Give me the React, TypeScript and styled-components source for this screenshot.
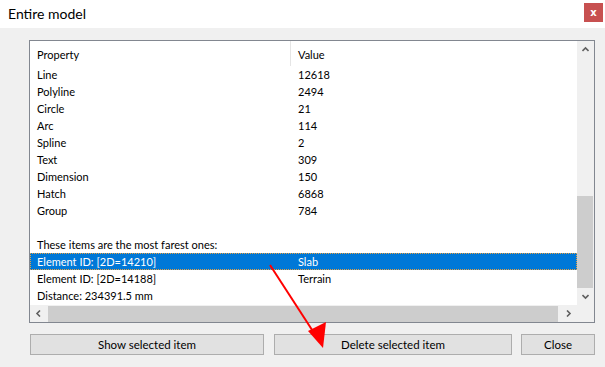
import React from "react";
import styled, { createGlobalStyle } from "styled-components";

const GlobalStyle = createGlobalStyle`
  html, body {
    margin: 0;
    padding: 0;
    background: #f0f0f0;
  }
  * {
    box-sizing: border-box;
  }
`;

const FONT = `"Segoe UI", Lato, "Liberation Sans", sans-serif`;

const Window = styled.div`
  position: relative;
  width: 605px;
  height: 367px;
  display: flex;
  flex-direction: column;
  background: #f0f0f0;
  font-family: ${FONT};
  font-size: 11px;
  color: #000;
  overflow: hidden;
`;

const TitleBar = styled.div`
  height: 28px;
  background: #ffffff;
  display: flex;
  align-items: center;
  justify-content: space-between;
  padding: 0 2px 0 8px;
`;

const Title = styled.span`
  font-size: 14px;
  color: #000;
  margin-top: -2px;
`;

const CloseX = styled.div`
  width: 19px;
  height: 19px;
  margin-top: -4px;
  background: #c75050;
  color: #fff;
  font-family: "DejaVu Sans", sans-serif;
  font-weight: bold;
  font-size: 10px;
  display: flex;
  align-items: center;
  justify-content: center;
`;

const Body = styled.div`
  flex: 1;
  display: flex;
  flex-direction: column;
  padding: 12px 10px 0 29px;
`;

const ListBox = styled.div`
  width: 566px;
  height: 283px;
  border: 1px solid #828790;
  background: #ffffff;
  display: grid;
  grid-template-columns: 1fr 17px;
  grid-template-rows: 1fr 17px;
`;

const Viewport = styled.div`
  display: flex;
  flex-direction: column;
  overflow: hidden;
`;

const HeaderRow = styled.div`
  height: 25px;
  display: grid;
  grid-template-columns: 261px 1fr;
  align-items: center;
`;

const HeaderCell = styled.div<{ $divider?: boolean }>`
  height: 100%;
  display: flex;
  align-items: center;
  padding-left: 7px;
  padding-top: 1px;
  border-right: ${(p) => (p.$divider ? "1px solid #e5e5e5" : "none")};
`;

const Row = styled.div<{ $selected?: boolean }>`
  height: 17px;
  display: grid;
  grid-template-columns: 261px 1fr;
  align-items: center;
  background: ${(p) => (p.$selected ? "#0078d7" : "transparent")};
  color: ${(p) => (p.$selected ? "#ffffff" : "#000000")};
  outline: ${(p) => (p.$selected ? "1px dotted #e8a040" : "none")};
  outline-offset: -1px;
`;

const Cell = styled.div`
  padding-left: 7px;
  white-space: nowrap;
  line-height: 17px;
`;

const VScroll = styled.div`
  background: #f0f0f0;
  display: flex;
  flex-direction: column;
`;

const HScroll = styled.div`
  background: #f0f0f0;
  display: flex;
  align-items: stretch;
`;

const Corner = styled.div`
  background: #f0f0f0;
`;

const ArrowBox = styled.div<{ $size: string }>`
  flex: 0 0 ${(p) => p.$size};
  display: flex;
  align-items: center;
  justify-content: center;
`;

const Track = styled.div<{ $vertical?: boolean }>`
  flex: 1;
  display: flex;
  flex-direction: ${(p) => (p.$vertical ? "column" : "row")};
`;

const Thumb = styled.div<{ $vertical?: boolean }>`
  background: #cdcdcd;
  margin: ${(p) => (p.$vertical ? "0 1px 0 0" : "1px 0 0 1px")};
`;

const ButtonRow = styled.div`
  display: flex;
  margin-top: 11px;
  padding-left: 1px;
`;

const Button = styled.button<{ $w: number; $gap?: number }>`
  width: ${(p) => p.$w}px;
  height: 21px;
  margin-left: ${(p) => p.$gap ?? 0}px;
  background: #e1e1e1;
  border: 1px solid #adadad;
  font-family: ${FONT};
  font-size: 11.5px;
  color: #000;
  padding: 0 0 1px;
`;

const Annotation = styled.svg`
  position: absolute;
  left: 0;
  top: 0;
  pointer-events: none;
`;

const Chevron = ({ dir }: { dir: "up" | "down" | "left" | "right" }) => {
  const paths: Record<string, string> = {
    up: "M0.5 5 L3.5 2 L6.5 5",
    down: "M0.5 2 L3.5 5 L6.5 2",
    left: "M5 0.5 L2 3.5 L5 6.5",
    right: "M2 0.5 L5 3.5 L2 6.5",
  };
  return (
    <svg width="7" height="7" viewBox="0 0 7 7">
      <path d={paths[dir]} fill="none" stroke="#606060" strokeWidth="1.6" />
    </svg>
  );
};

const props: [string, string][] = [
  ["Line", "12618"],
  ["Polyline", "2494"],
  ["Circle", "21"],
  ["Arc", "114"],
  ["Spline", "2"],
  ["Text", "309"],
  ["Dimension", "150"],
  ["Hatch", "6868"],
  ["Group", "784"],
];

export default function App() {
  return (
    <>
      <GlobalStyle />
      <Window>
        <TitleBar>
          <Title>Entire model</Title>
          <CloseX>x</CloseX>
        </TitleBar>
        <Body>
          <ListBox>
            <Viewport>
              <HeaderRow>
                <HeaderCell $divider>Property</HeaderCell>
                <HeaderCell>Value</HeaderCell>
              </HeaderRow>
              {props.map(([k, v]) => (
                <Row key={k}>
                  <Cell>{k}</Cell>
                  <Cell>{v}</Cell>
                </Row>
              ))}
              <Row>
                <Cell />
                <Cell />
              </Row>
              <Row>
                <Cell>These items are the most farest ones:</Cell>
                <Cell />
              </Row>
              <Row $selected>
                <Cell>Element ID: [2D=14210]</Cell>
                <Cell>Slab</Cell>
              </Row>
              <Row>
                <Cell>Element ID: [2D=14188]</Cell>
                <Cell>Terrain</Cell>
              </Row>
              <Row>
                <Cell>Distance: 234391.5 mm</Cell>
                <Cell />
              </Row>
            </Viewport>
            <VScroll>
              <ArrowBox $size="17px">
                <Chevron dir="up" />
              </ArrowBox>
              <Track $vertical>
                <div style={{ flex: "0 0 138px" }} />
                <Thumb $vertical style={{ flex: 1 }} />
              </Track>
              <ArrowBox $size="17px">
                <Chevron dir="down" />
              </ArrowBox>
            </VScroll>
            <HScroll>
              <ArrowBox $size="17px">
                <Chevron dir="left" />
              </ArrowBox>
              <Track>
                <Thumb style={{ flex: "0 0 510px" }} />
              </Track>
              <ArrowBox $size="17px">
                <Chevron dir="right" />
              </ArrowBox>
            </HScroll>
            <Corner />
          </ListBox>
          <ButtonRow>
            <Button $w={234}>Show selected item</Button>
            <Button $w={238} $gap={10}>
              Delete selected item
            </Button>
            <Button $w={74} $gap={9}>
              Close
            </Button>
          </ButtonRow>
        </Body>
        <Annotation width="605" height="367" viewBox="0 0 605 367">
          <line x1="270" y1="265" x2="316" y2="336" stroke="#ff0000" strokeWidth="2" />
          <polygon points="323,348 308,331 326,322" fill="#ff0000" />
        </Annotation>
      </Window>
    </>
  );
}
